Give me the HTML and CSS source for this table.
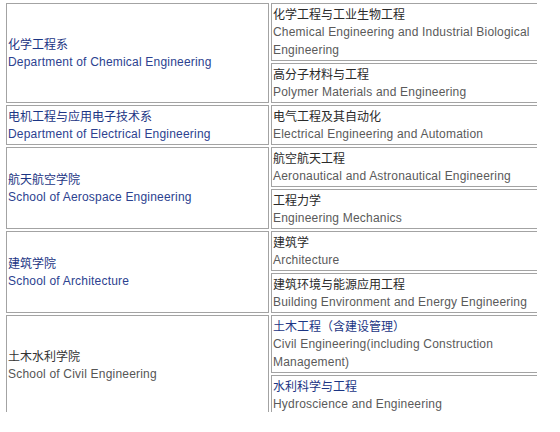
FILE: index.html
```html
<!DOCTYPE html>
<html lang="zh-CN">
<head>
<meta charset="utf-8">
<link rel="stylesheet" href="styles.css">
</head>
<body>
<div class="frame">
<table class="majors">
  <colgroup><col class="c-dept"><col class="c-major"></colgroup>
  <tbody>
    <tr>
      <td class="dept" rowspan="2"><div class="zh">化学工程系</div><div class="en">Department of Chemical Engineering</div></td>
      <td class="major"><div class="zh">化学工程与工业生物工程</div><div class="en">Chemical Engineering and Industrial Biological Engineering</div></td>
    </tr>
    <tr>
      <td class="major"><div class="zh">高分子材料与工程</div><div class="en">Polymer Materials and Engineering</div></td>
    </tr>
    <tr>
      <td class="dept"><div class="zh">电机工程与应用电子技术系</div><div class="en">Department of Electrical Engineering</div></td>
      <td class="major"><div class="zh">电气工程及其自动化</div><div class="en">Electrical Engineering and Automation</div></td>
    </tr>
    <tr>
      <td class="dept" rowspan="2"><div class="zh">航天航空学院</div><div class="en">School of Aerospace Engineering</div></td>
      <td class="major"><div class="zh">航空航天工程</div><div class="en">Aeronautical and Astronautical Engineering</div></td>
    </tr>
    <tr>
      <td class="major"><div class="zh">工程力学</div><div class="en">Engineering Mechanics</div></td>
    </tr>
    <tr>
      <td class="dept" rowspan="2"><div class="zh">建筑学院</div><div class="en">School of Architecture</div></td>
      <td class="major"><div class="zh">建筑学</div><div class="en">Architecture</div></td>
    </tr>
    <tr>
      <td class="major"><div class="zh">建筑环境与能源应用工程</div><div class="en">Building Environment and Energy Engineering</div></td>
    </tr>
    <tr>
      <td class="dept plain" rowspan="2"><div class="zh">土木水利学院</div><div class="en">School of Civil Engineering</div></td>
      <td class="major blue"><div class="zh">土木工程（含建设管理）</div><div class="en">Civil Engineering(including Construction Management)</div></td>
    </tr>
    <tr>
      <td class="major blue"><div class="zh">水利科学与工程</div><div class="en">Hydroscience and Engineering</div></td>
    </tr>
    <tr>
      <td class="dept plain"><div class="zh">&nbsp;</div><div class="en">&nbsp;</div></td>
      <td class="major"><div class="zh">&nbsp;</div><div class="en">&nbsp;</div></td>
    </tr>
  </tbody>
</table>
</div>
</body>
</html>
```
FILE: styles.css
```css
html, body {
  margin: 0;
  padding: 0;
  background: #ffffff;
}

.frame {
  width: 537px;
  height: 412px;
  overflow: hidden;
  padding: 1px 0 0 4px;
  box-sizing: border-box;
}

.majors {
  width: 537px;
  table-layout: fixed;
  border-collapse: separate;
  border-spacing: 2px;
  font-family: "Liberation Sans", Arial, "Noto Sans CJK SC", sans-serif;
  font-size: 12px;
  line-height: 18px;
}

.c-dept {
  width: 263px;
}

.majors td {
  border: 1px solid #a3a3a3;
  padding: 1px;
  vertical-align: middle;
  text-align: left;
}

.zh {
  font-family: "Noto Sans CJK SC", sans-serif;
  font-size: 12px;
}

.en {
  letter-spacing: 0.2px;
}

.dept .zh {
  color: #1c3584;
}

.dept .en {
  color: #2c4290;
}

.dept.plain .zh {
  color: #333333;
}

.dept.plain .en {
  color: #555555;
}

.major .zh {
  color: #2a2a2a;
}

.major .en {
  color: #5a5a5a;
}

.major.blue .zh {
  color: #1c3584;
}
```
